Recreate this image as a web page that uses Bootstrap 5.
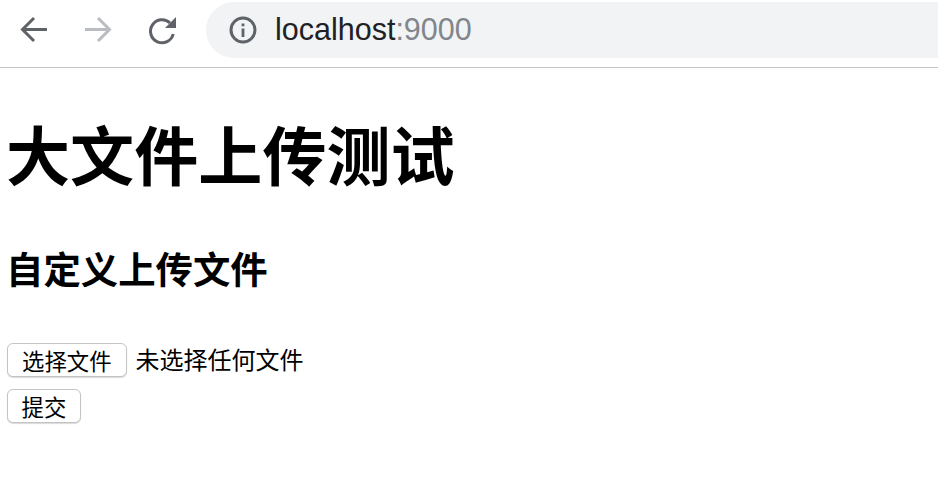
<!DOCTYPE html>
<html lang="zh"><head><meta charset="utf-8">
<link href="https://cdn.jsdelivr.net/npm/bootstrap@5.3.0/dist/css/bootstrap.min.css" rel="stylesheet">
<style>
html,body{height:100%;background:#fff;overflow:hidden}
body{font-family:"Noto Sans CJK SC","Liberation Sans",sans-serif;color:#000}
.chrome-bar{height:68px;border-bottom:1px solid #c4c4c4;padding:2px 0 0 18px}
.nav-ico{width:32px;height:32px;flex:none;margin-top:12px}
.nav-gap{margin-right:32px}
.addr{margin-left:28px;height:56px;border-radius:28px 0 0 28px;background:#f1f3f4;padding-left:23px;font-family:"Liberation Sans",sans-serif;font-size:30.5px;color:#202124}
.info-ico{margin-right:18px;flex:none}
.addr-port{color:#80868b}
.page-body{padding:0 7px}
.title-a{font-size:64.1px;font-weight:700;line-height:1;margin:52px 0 0 -1px}
.title-b{font-size:37.4px;font-weight:700;line-height:1;margin:66px 0 0 -1px}
.file-row{margin-top:54px;font-size:24px;line-height:34px}
.file-note{margin:0 0 2px 9px}
.fake-btn{font-size:22.4px;line-height:32px;padding:0 14px;background:#fff;border:1px solid #c4c4c4;border-radius:6px;color:#000;box-shadow:0 1px 1px rgba(0,0,0,.15)}
.submit-row{margin-top:11px}
.submit-row .fake-btn{padding:0 13.5px}
</style></head>
<body>
<div class="chrome-bar d-flex align-items-start">
<svg class="nav-ico nav-gap" viewBox="0 0 32 32" fill="none" stroke="#5f6368" stroke-width="3"><path d="M29 15.500H5M16 4 4.500 15.500 16 27"/></svg>
<svg class="nav-ico nav-gap" viewBox="0 0 32 32" fill="none" stroke="#b9bcc0" stroke-width="3"><path d="M3 15.500h24M16 4l11.500 11.500L16 27"/></svg>
<svg class="nav-ico" viewBox="0 0 32 32" fill="none" stroke="#5f6368" stroke-width="3"><path d="M24 9A11.500 11.500 0 1 0 27.200 20"/><path d="M30 3v11H19z" fill="#5f6368" stroke="none"/></svg>
<div class="addr flex-grow-1 d-flex align-items-center">
<svg class="info-ico" width="28" height="28" viewBox="0 0 28 28"><circle cx="14" cy="14" r="12" fill="none" stroke="#5f6368" stroke-width="3"/><path d="M12.600 12.500h2.800V21h-2.800zM12.600 7.500h2.800v2.800h-2.800z" fill="#5f6368"/></svg>
<span>localhost<span class="addr-port">:9000</span></span>
</div>
</div>
<div class="page-body">
<h1 class="title-a">大文件上传测试</h1>
<h2 class="title-b">自定义上传文件</h2>
<div class="file-row d-flex align-items-center"><button type="button" class="fake-btn">选择文件</button><span class="file-note">未选择任何文件</span></div>
<div class="submit-row"><button type="button" class="fake-btn">提交</button></div>
</div>
<script src="https://cdn.jsdelivr.net/npm/bootstrap@5.3.0/dist/js/bootstrap.bundle.min.js"></script>
</body></html>
